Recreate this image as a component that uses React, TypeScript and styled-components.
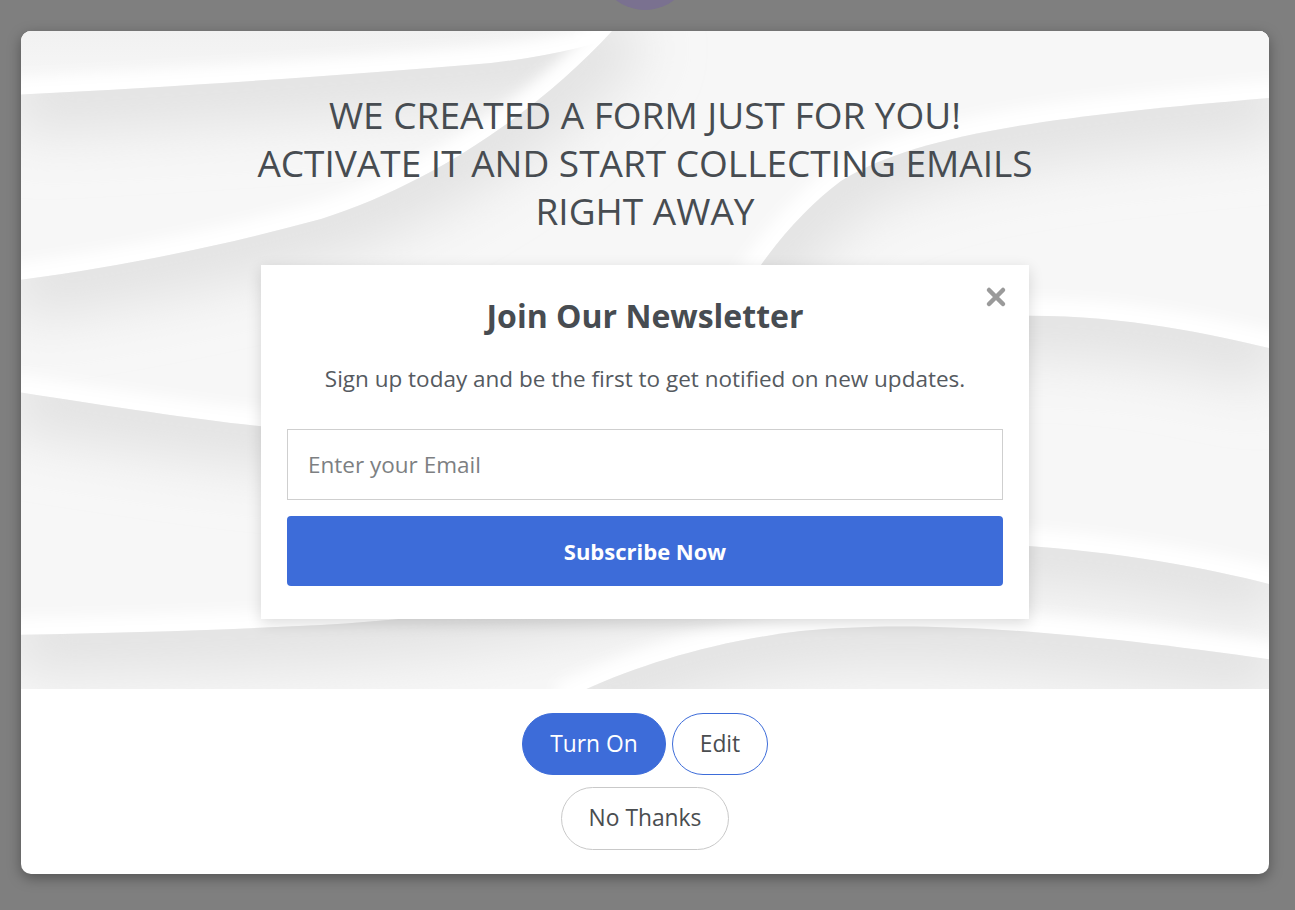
import React from "react";
import styled, { createGlobalStyle } from "styled-components";

const GlobalStyle = createGlobalStyle`
  html, body { margin: 0; padding: 0; }
  body {
    background: #7f7f7f;
    font-family: "Open Sans", "Noto Sans", sans-serif;
    width: 1295px;
    height: 910px;
    overflow: hidden;
  }
`;

const Page = styled.div`
  position: relative;
  width: 1295px;
  height: 910px;
  padding: 31px 0 0 21px;
  box-sizing: border-box;
`;

const Avatar = styled.div`
  position: absolute;
  left: 597px;
  top: -86px;
  width: 96px;
  height: 96px;
  border-radius: 50%;
  background: #7a7190;
`;

const Modal = styled.div`
  position: relative;
  width: 1248px;
  height: 843px;
  background: #ffffff;
  border-radius: 10px;
  overflow: hidden;
  box-shadow: 0 4px 14px rgba(0, 0, 0, 0.35);
  display: flex;
  flex-direction: column;
`;

const Hero = styled.div`
  position: relative;
  height: 658px;
  background: #f4f4f4;
  display: flex;
  flex-direction: column;
  align-items: center;
  padding-top: 60px;
  box-sizing: border-box;
  overflow: hidden;
`;

const Waves = styled.svg`
  position: absolute;
  inset: 0;
  width: 100%;
  height: 100%;
`;

const Headline = styled.h1`
  position: relative;
  margin: 0;
  font-size: 37px;
  line-height: 48px;
  font-weight: 500;
  color: #474c51;
  text-align: center;
  white-space: nowrap;
`;

const Card = styled.div`
  position: relative;
  margin-top: 30px;
  width: 768px;
  height: 354px;
  background: #ffffff;
  box-shadow: 0 4px 14px rgba(0, 0, 0, 0.14);
  padding: 32px 26px 0;
  box-sizing: border-box;
  display: flex;
  flex-direction: column;
  align-items: center;
`;

const Close = styled.button`
  position: absolute;
  top: 17px;
  right: 18px;
  width: 30px;
  height: 30px;
  border: none;
  background: none;
  padding: 0;
  display: flex;
  align-items: center;
  justify-content: center;
`;

const CardTitle = styled.h2`
  margin: 0;
  font-size: 32px;
  line-height: 38px;
  font-weight: 700;
  color: #474c51;
  white-space: nowrap;
`;

const CardText = styled.p`
  margin: 29px 0 0;
  font-size: 22.5px;
  line-height: 30px;
  color: #555a5f;
  white-space: nowrap;
`;

const EmailInput = styled.div`
  margin-top: 35px;
  width: 100%;
  height: 71px;
  border: 1px solid #cfcfcf;
  box-sizing: border-box;
  display: flex;
  align-items: center;
  padding-left: 20px;
  font-size: 22.5px;
  color: #7d7f82;
`;

const Subscribe = styled.div`
  margin-top: 16px;
  width: 100%;
  height: 70px;
  border-radius: 4px;
  background: #3d6cd9;
  color: #ffffff;
  font-size: 22px;
  font-weight: 700;
  display: flex;
  align-items: center;
  justify-content: center;
`;

const Footer = styled.div`
  flex: 1;
  display: flex;
  flex-direction: column;
  align-items: center;
  padding-top: 24px;
  gap: 12px;
`;

const Row = styled.div`
  display: flex;
  gap: 6px;
`;

const Pill = styled.div<{ $variant: "primary" | "outline" | "plain"; $w: number }>`
  width: ${(p) => p.$w}px;
  height: ${(p) => (p.$variant === "plain" ? 63 : 62)}px;
  box-sizing: border-box;
  border-radius: 32px;
  display: flex;
  align-items: center;
  justify-content: center;
  font-size: 22.8px;
  padding-bottom: 2px;
  background: ${(p) => (p.$variant === "primary" ? "#3d6cd9" : "#ffffff")};
  color: ${(p) => (p.$variant === "primary" ? "#ffffff" : "#4a4d50")};
  border: 1px solid ${(p) => (p.$variant === "plain" ? "#c9c9c9" : "#3d6cd9")};
`;

const EDGES: { id: string; d: string; close: string }[] = [
  {
    id: "e1",
    d: "M-10 64 C150 56 330 44 470 32 C540 24 590 10 640 -10",
    close: "L1260 -10 L1260 670 L-10 670 Z",
  },
  {
    id: "e2",
    d: "M-10 250 C100 236 200 215 300 188 C420 150 530 70 600 -10",
    close: "L1260 -10 L1260 670 L-10 670 Z",
  },
  {
    id: "e1r",
    d: "M580 670 C630 430 700 240 820 150 C900 100 1050 84 1260 66",
    close: "L1260 670 Z",
  },
  {
    id: "e3",
    d: "M-10 360 C120 380 220 396 300 400 C520 410 700 300 989 285 C1100 282 1200 305 1260 320",
    close: "L1260 670 L-10 670 Z",
  },
  {
    id: "e4",
    d: "M-10 604 C100 602 200 599 300 594 C560 580 760 505 989 514 C1100 520 1200 540 1260 556",
    close: "L1260 670 L-10 670 Z",
  },
  {
    id: "e5",
    d: "M540 670 C600 640 680 612 780 600 C900 588 1050 600 1260 630",
    close: "L1260 670 Z",
  },
];

function WaveBackground() {
  return (
    <Waves viewBox="0 0 1248 658" preserveAspectRatio="none">
      <defs>
        <linearGradient id="top" x1="0" y1="0" x2="0" y2="1">
          <stop offset="0" stopColor="#f1f1f1" />
          <stop offset="1" stopColor="#fbfbfb" />
        </linearGradient>
        <filter id="soft" filterUnits="userSpaceOnUse" x="-200" y="-200" width="1648" height="1058">
          <feGaussianBlur stdDeviation="28" />
        </filter>
        <filter id="glow" filterUnits="userSpaceOnUse" x="-200" y="-200" width="1648" height="1058">
          <feGaussianBlur stdDeviation="7" />
        </filter>
        {EDGES.map((e) => (
          <clipPath id={`c-${e.id}`} key={e.id}>
            <path d={`${e.d} ${e.close}`} />
          </clipPath>
        ))}
      </defs>
      <rect x="0" y="0" width="1248" height="90" fill="url(#top)" />
      {EDGES.map((e) => (
        <g key={e.id}>
          <path d={e.d} fill="none" stroke="#ffffff" strokeWidth="34" filter="url(#glow)" />
          <g clipPath={`url(#c-${e.id})`}>
            <rect x="-20" y="-20" width="1300" height="700" fill="#f7f7f7" />
            <path d={e.d} fill="none" stroke="#e2e2e2" strokeWidth="80" filter="url(#soft)" />
          </g>
        </g>
      ))}
    </Waves>
  );
}

export default function App() {
  return (
    <>
      <GlobalStyle />
      <Page>
        <Avatar />
        <Modal>
          <Hero>
            <WaveBackground />
            <Headline>
              WE CREATED A FORM JUST FOR YOU!
              <br />
              ACTIVATE IT AND START COLLECTING EMAILS
              <br />
              RIGHT AWAY
            </Headline>
            <Card>
              <Close aria-label="close">
                <svg width="22" height="22" viewBox="0 0 22 22">
                  <path d="M4 4 L18 18 M18 4 L4 18" stroke="#9a9a9a" strokeWidth="4.5" strokeLinecap="round" />
                </svg>
              </Close>
              <CardTitle>Join Our Newsletter</CardTitle>
              <CardText>Sign up today and be the first to get notified on new updates.</CardText>
              <EmailInput>Enter your Email</EmailInput>
              <Subscribe>Subscribe Now</Subscribe>
            </Card>
          </Hero>
          <Footer>
            <Row>
              <Pill $variant="primary" $w={144}>Turn On</Pill>
              <Pill $variant="outline" $w={96}>Edit</Pill>
            </Row>
            <Pill $variant="plain" $w={168}>No Thanks</Pill>
          </Footer>
        </Modal>
      </Page>
    </>
  );
}
